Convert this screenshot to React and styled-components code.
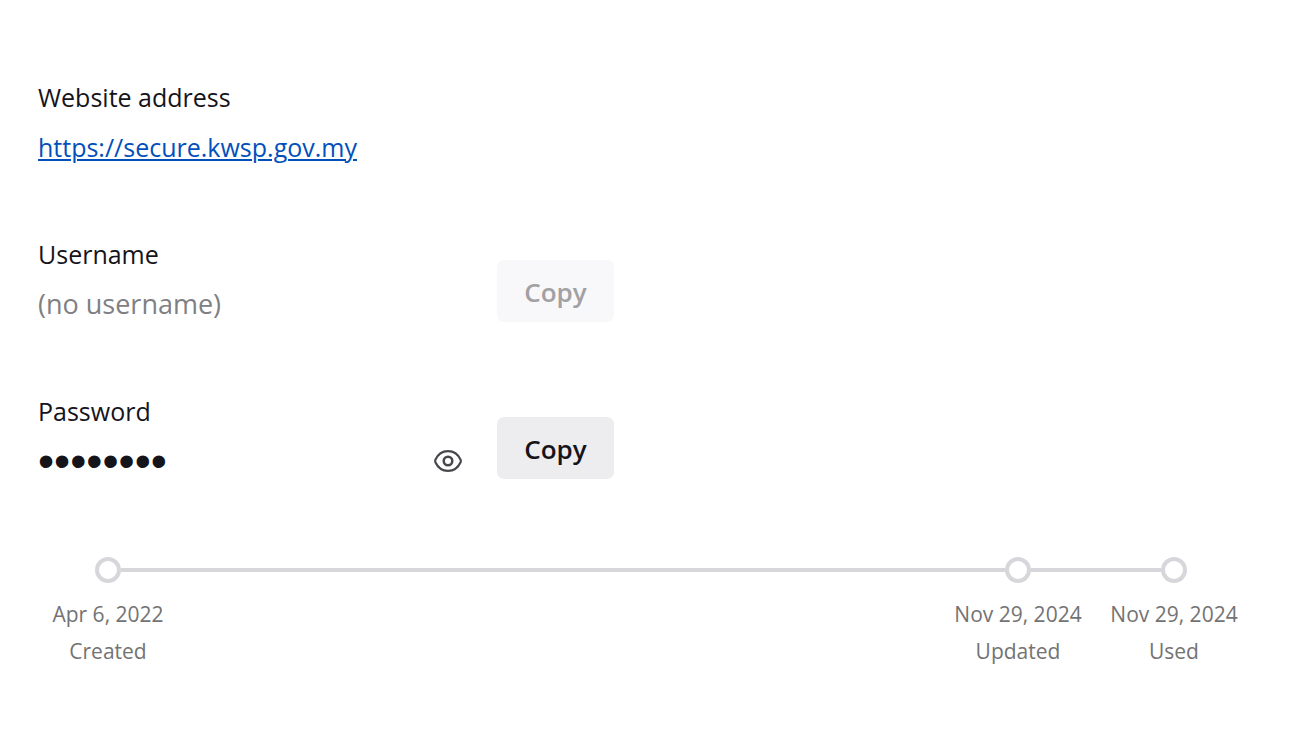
import React, { useState } from 'react';
import styled, { createGlobalStyle } from 'styled-components';

const GlobalStyle = createGlobalStyle`
  body {
    margin: 0;
    background-color: #fff;
    color: #15141a;
    font-family: 'Open Sans', 'Noto Sans', sans-serif;
  }

  * {
    box-sizing: border-box;
  }
`;

const LoginItem = styled.main`
  display: flex;
  flex-direction: column;
  padding: 79px 54px 60px 38px;
`;

const Details = styled.div`
  display: flex;
  flex-direction: column;
  gap: 71px;
`;

const Row = styled.div`
  display: flex;
  align-items: flex-end;
  gap: 32px;
`;

const Field = styled.div`
  display: flex;
  flex-direction: column;
  gap: 14px;
  width: 427px;
`;

const Label = styled.label`
  font-size: 25px;
  line-height: 36px;
`;

const SiteLink = styled.a`
  align-self: flex-start;
  color: #0250bb;
  font-size: 25px;
  line-height: 36px;
  text-decoration: underline;
  text-decoration-thickness: 2px;
  text-underline-offset: 2px;
  text-decoration-skip-ink: auto;
`;

const ValueRow = styled.div`
  display: flex;
  align-items: center;
  height: 36px;
`;

const ValueInput = styled.input`
  flex: 1;
  min-width: 0;
  height: 36px;
  padding: 0;
  border: none;
  outline: none;
  background: transparent;
  color: #15141a;
  font-family: ${props => (props.$masked ? "'Liberation Sans', sans-serif" : 'inherit')};
  font-size: ${props => (props.$masked ? '46px' : '27px')};
  line-height: 36px;

  &::placeholder {
    color: #808084;
    opacity: 1;
  }
`;

const RevealButton = styled.button`
  display: flex;
  align-items: center;
  justify-content: center;
  width: 34px;
  height: 34px;
  padding: 0;
  border: none;
  background: transparent;
  color: #47464b;
  cursor: pointer;
`;

const CopyButton = styled.button`
  width: 117px;
  height: 62px;
  padding: 2px 0 0;
  border: none;
  border-radius: 7px;
  background-color: #ededf0;
  color: #15141a;
  font-family: inherit;
  font-size: 26px;
  font-weight: 600;
  cursor: pointer;

  &:disabled {
    background-color: #f8f8fa;
    color: #a1a1a3;
    cursor: default;
  }
`;

const Timeline = styled.ol`
  display: flex;
  margin: 78px 0 0;
  padding: 0;
  list-style: none;
`;

const Step = styled.li`
  display: flex;
  flex-direction: column;
  align-items: center;
  width: ${props => (props.$first ? '140px' : '156px')};
  color: #737373;
  font-size: 21px;
  line-height: 37px;
`;

const Track = styled.div`
  display: flex;
  align-items: center;
  width: 100%;
  height: 26px;
  margin-bottom: 13px;
`;

const Line = styled.span`
  flex: 1;
  height: 4px;
  background-color: ${props => (props.$hidden ? 'transparent' : '#d7d7db')};
`;

const Dot = styled.span`
  width: 26px;
  height: 26px;
  border: 4px solid #d7d7db;
  border-radius: 50%;
`;

const Stretch = styled.li`
  display: flex;
  flex: 1;
  align-items: center;
  height: 26px;
`;

const EyeIcon = () => (
  <svg
    width="30"
    height="24"
    viewBox="0 0 30 24"
    fill="none"
    stroke="currentColor"
    strokeWidth="2.2"
    strokeLinejoin="round"
    aria-hidden="true"
  >
    <path d="M2.400 10.800C4.800 5.600 9.500 2.200 15 2.200S25.200 5.600 27.600 10.800Q28.100 12 27.600 13.200C25.200 18.400 20.500 21.800 15 21.800S4.800 18.400 2.400 13.200Q1.900 12 2.400 10.800Z" />
    <circle cx="15" cy="12" r="4.300" strokeWidth="2.500" />
  </svg>
);

const steps = [
  { date: 'Apr 6, 2022', action: 'Created' },
  { date: 'Nov 29, 2024', action: 'Updated' },
  { date: 'Nov 29, 2024', action: 'Used' },
];

const App = () => {
  const [revealed, setRevealed] = useState(false);
  const password = 'password';

  const copyPassword = () => {
    navigator.clipboard.writeText(password);
  };

  return (
    <>
      <GlobalStyle />
      <LoginItem>
        <Details>
          <Field>
            <Label as="span">Website address</Label>
            <SiteLink href="https://secure.kwsp.gov.my">https://secure.kwsp.gov.my</SiteLink>
          </Field>

          <Row>
            <Field>
              <Label htmlFor="username">Username</Label>
              <ValueRow>
                <ValueInput id="username" type="text" placeholder="(no username)" readOnly />
              </ValueRow>
            </Field>
            <CopyButton type="button" disabled>Copy</CopyButton>
          </Row>

          <Row>
            <Field>
              <Label htmlFor="password">Password</Label>
              <ValueRow>
                <ValueInput
                  id="password"
                  type={revealed ? 'text' : 'password'}
                  value={password}
                  $masked={!revealed}
                  readOnly
                />
                <RevealButton type="button" aria-label="Show password" onClick={() => setRevealed(!revealed)}>
                  <EyeIcon />
                </RevealButton>
              </ValueRow>
            </Field>
            <CopyButton type="button" onClick={copyPassword}>Copy</CopyButton>
          </Row>
        </Details>

        <Timeline>
          {steps.map((step, index) => (
            <React.Fragment key={step.action}>
              {index === 1 && (
                <Stretch aria-hidden="true">
                  <Line />
                </Stretch>
              )}
              <Step $first={index === 0}>
                <Track>
                  <Line $hidden={index === 0} />
                  <Dot />
                  <Line $hidden={index === steps.length - 1} />
                </Track>
                <span>{step.date}</span>
                <span>{step.action}</span>
              </Step>
            </React.Fragment>
          ))}
        </Timeline>
      </LoginItem>
    </>
  );
};

export default App;
